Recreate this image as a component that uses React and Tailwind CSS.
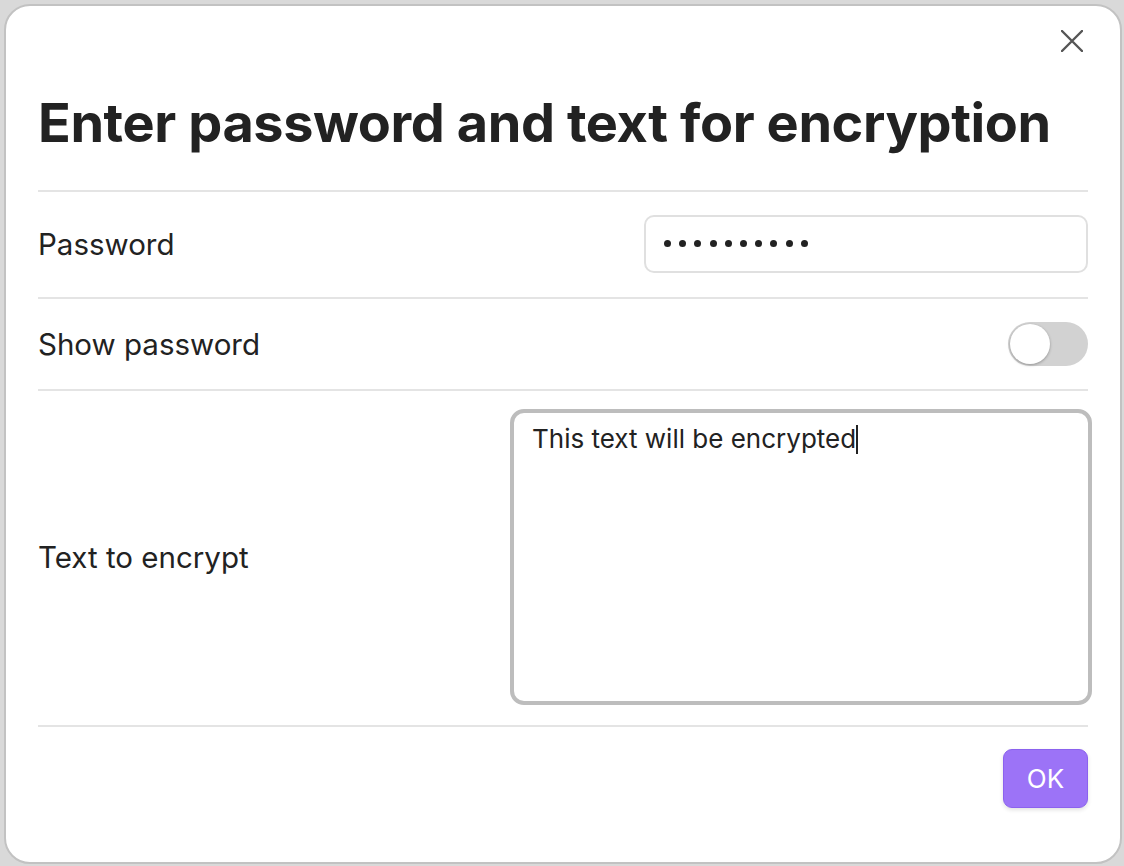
import React from "react";

export default function App() {
  const dots = Array.from({ length: 10 });
  return (
    <div
      className="w-[1124px] h-[866px] bg-[#d9d9d9] pl-[4px] pr-[2px] pt-[4px] pb-[2px]"
      style={{ fontFamily: "Inter, 'Noto Sans', sans-serif" }}
    >
      <div className="relative h-full rounded-[26px] border-2 border-[#c2c2c2] bg-white px-[32px] flex flex-col">
        <button className="absolute right-[32px] top-[19px] w-[32px] h-[32px] flex items-center justify-center text-[#555555]">
          <svg width="22" height="22" viewBox="0 0 22 22" fill="none" stroke="currentColor" strokeWidth="2.4" strokeLinecap="round">
            <path d="M1 1 L21 21 M21 1 L1 21" />
          </svg>
        </button>

        <h1 className="pt-[85px] text-[54px] leading-[64px] font-bold text-[#222222] tracking-[-0.4px]">
          Enter password and text for encryption
        </h1>

        <div className="mt-[35px] h-[2px] bg-[#e4e4e4]" />

        <div className="h-[105px] flex items-center justify-between">
          <span className="text-[29.5px] text-[#222222]">Password</span>
          <div className="w-[444px] h-[58px] mt-[-2px] rounded-[10px] border-2 border-[#e0e0e0] flex items-center pl-[18px] gap-[8.2px]">
            {dots.map((_, i) => (
              <span key={i} className="w-[7px] h-[7px] rounded-full bg-[#222222]" />
            ))}
          </div>
        </div>

        <div className="h-[2px] bg-[#e4e4e4]" />

        <div className="h-[90px] flex items-center justify-between">
          <span className="text-[29.5px] text-[#222222]">Show password</span>
          <div className="w-[80px] h-[44px] rounded-full bg-[#d2d2d2] p-[2px] flex items-center">
            <span className="w-[40px] h-[40px] rounded-full bg-white shadow-[0_1px_3px_rgba(0,0,0,0.3)]" />
          </div>
        </div>

        <div className="h-[2px] bg-[#e4e4e4]" />

        <div className="pt-[18px] pb-[20px] flex items-center justify-between">
          <span className="text-[29.5px] text-[#222222]">Text to encrypt</span>
          <div className="w-[582px] h-[296px] mr-[-4px] rounded-[14px] border-[4px] border-[#bdbdbd] px-[18px] pt-[8px]">
            <span className="text-[26px] leading-[36px] text-[#222222]">This text will be encrypted</span>
            <span className="inline-block w-[2px] h-[29px] bg-[#222222] align-[-6px]" />
          </div>
        </div>

        <div className="h-[2px] bg-[#e4e4e4]" />

        <div className="flex justify-end pt-[22px]">
          <button className="w-[85px] h-[59px] rounded-[9px] bg-[#9c73f7] border border-[#8b62ee] text-white text-[26px] shadow-[0_2px_4px_rgba(0,0,0,0.12)]">
            OK
          </button>
        </div>
      </div>
    </div>
  );
}
